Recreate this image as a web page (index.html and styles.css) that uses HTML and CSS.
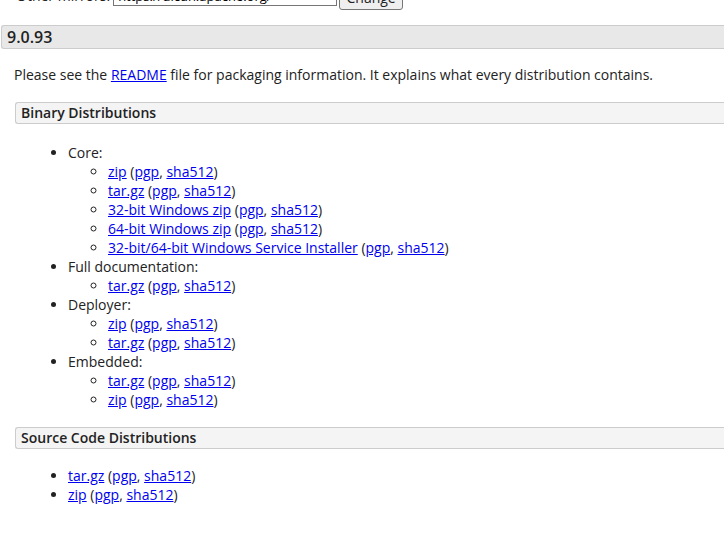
FILE: index.html
```html
<!DOCTYPE html>
<html lang="en">
<head>
    <meta charset="UTF-8">
    <title>Apache Tomcat 9 Software Downloads</title>
    <link rel="stylesheet" href="styles.css">
</head>
<body>
    <div class="page">
        <!-- mirror selection -->
        <form class="mirrors">
            <span class="mirrors-label">Other mirrors:</span>
            <select class="mirror-select"><option>https://dlcdn.apache.org/</option></select>
            <button type="button" class="change-btn">Change</button>
        </form>

        <!-- 9.0.93 release -->
        <div class="section">
            <h3>9.0.93</h3>
            <div class="section-body">
                <p>Please see the <a href="#">README</a> file for packaging information. It explains what every distribution contains.</p>

                <div class="subsection">
                    <h4>Binary Distributions</h4>
                    <div class="subsection-body">
                        <ul>
                            <li>Core:
                                <ul>
                                    <li><a href="#">zip</a> (<a href="#">pgp</a>, <a href="#">sha512</a>)</li>
                                    <li><a href="#">tar.gz</a> (<a href="#">pgp</a>, <a href="#">sha512</a>)</li>
                                    <li><a href="#">32-bit Windows zip</a> (<a href="#">pgp</a>, <a href="#">sha512</a>)</li>
                                    <li><a href="#">64-bit Windows zip</a> (<a href="#">pgp</a>, <a href="#">sha512</a>)</li>
                                    <li><a href="#">32-bit/64-bit Windows Service Installer</a> (<a href="#">pgp</a>, <a href="#">sha512</a>)</li>
                                </ul>
                            </li>
                            <li>Full documentation:
                                <ul>
                                    <li><a href="#">tar.gz</a> (<a href="#">pgp</a>, <a href="#">sha512</a>)</li>
                                </ul>
                            </li>
                            <li>Deployer:
                                <ul>
                                    <li><a href="#">zip</a> (<a href="#">pgp</a>, <a href="#">sha512</a>)</li>
                                    <li><a href="#">tar.gz</a> (<a href="#">pgp</a>, <a href="#">sha512</a>)</li>
                                </ul>
                            </li>
                            <li>Embedded:
                                <ul>
                                    <li><a href="#">tar.gz</a> (<a href="#">pgp</a>, <a href="#">sha512</a>)</li>
                                    <li><a href="#">zip</a> (<a href="#">pgp</a>, <a href="#">sha512</a>)</li>
                                </ul>
                            </li>
                        </ul>
                    </div>
                </div>

                <div class="subsection">
                    <h4>Source Code Distributions</h4>
                    <div class="subsection-body">
                        <ul class="source-list">
                            <li><a href="#">tar.gz</a> (<a href="#">pgp</a>, <a href="#">sha512</a>)</li>
                            <li><a href="#">zip</a> (<a href="#">pgp</a>, <a href="#">sha512</a>)</li>
                        </ul>
                    </div>
                </div>
            </div>
        </div>
    </div>
</body>
</html>
```

FILE: styles.css
```css
/* base */
* {
    box-sizing: border-box;
}

body {
    margin: 0;
    background-color: #fff;
    color: #222;
    font-family: 'Open Sans', 'Liberation Sans', Arial, sans-serif;
    font-size: 14px;
    line-height: 19px;
    overflow: hidden;
}

a {
    color: #0000ee;
}

/* page is scrolled a little, mirror form sits half off the top */
.page {
    margin-top: -17px;
}

/* mirror form */
.mirrors {
    display: flex;
    align-items: center;
    padding-left: 16px;
    height: 25px;
    margin: 0;
}

.mirrors-label {
    margin-right: 3px;
}

.mirror-select {
    width: 224px;
    height: 21px;
    font-family: inherit;
    font-size: 13px;
    border: 1px solid #767676;
    border-radius: 0;
    background-color: #fff;
    margin-right: 2px;
}

.change-btn {
    height: 24px;
    width: 64px;
    margin-top: 4px;
    padding: 0;
    font-family: inherit;
    font-size: 14px;
    color: #222;
    background-color: #efefef;
    border: 1px solid #767676;
    border-radius: 3px;
}

/* sections */
.section {
    margin-top: 17px;
}

.section h3 {
    margin: 0 0 0 1px;
    padding: 0 5px;
    height: 24px;
    line-height: 22px;
    font-size: 16px;
    font-weight: 600;
    background-color: #e8e8e8;
    border: 1px solid #ccc;
    border-right: none;
    border-radius: 3px 0 0 3px;
}

.section-body {
    padding-left: 14px;
}

.section-body p {
    margin: 16px 0 18px;
}

.subsection h4 {
    margin: 0 0 0 1px;
    padding: 0 5px;
    height: 22px;
    line-height: 20px;
    font-size: 14px;
    font-weight: 600;
    background-color: #f4f4f4;
    border: 1px solid #ccc;
    border-right: none;
    border-radius: 3px 0 0 3px;
}

.subsection-body ul {
    margin: 19px 0 18px;
    padding-left: 54px;
}

.subsection-body ul ul {
    margin: 0;
    padding-left: 40px;
}

.subsection-body .source-list {
    margin-top: 17px;
}

.subsection-body li {
    line-height: 19px;
}
```
